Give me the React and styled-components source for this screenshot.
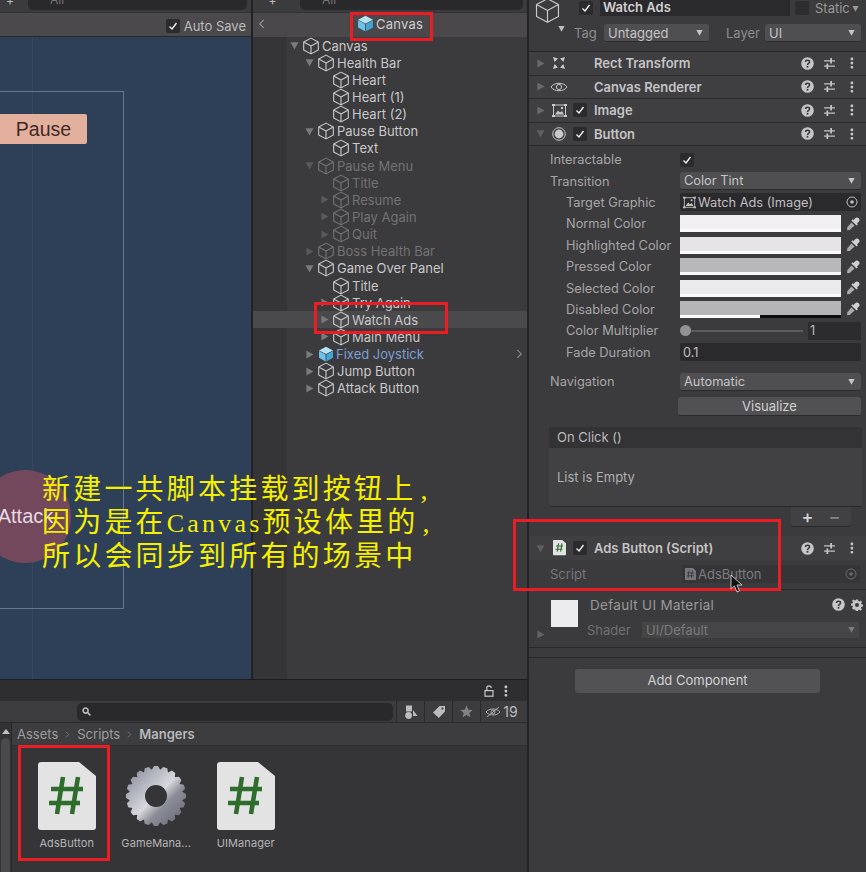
import React from "react";
import styled, { createGlobalStyle } from "styled-components";

const Global = createGlobalStyle`
  html, body { margin: 0; padding: 0; background: #3b3a3c; overflow: hidden; }
  * { box-sizing: border-box; }
`;

const Page = styled.div`
  position: relative; width: 866px; height: 872px; display: flex; overflow: hidden;
  font-family: Inter, "Noto Sans", "Liberation Sans", sans-serif; font-size: 13px; color: #c6c5c7; background: #3b3a3c;
`;
const LeftArea = styled.div`width: 529px; height: 872px; display: flex; flex-direction: column; flex: none;`;
const TopPanels = styled.div`height: 680px; display: flex; flex: none; border-bottom: 1px solid #1d1d1f;`;
const ScenePanel = styled.div`width: 253px; flex: none; display: flex; flex-direction: column; border-right: 2px solid #222124;`;
const HierarchyPanel = styled.div`flex: 1; display: flex; flex-direction: column; min-width: 0; border-right: 2px solid #232225;`;

const SearchStrip = styled.div`
  height: 12px; flex: none; display: flex; align-items: flex-end; gap: 8px; padding: 0 4px 2px 0; background: #3b3a3c; overflow: hidden;
`;
const PlusStub = styled.div`width: ${p => p.$w}px; height: 10px; display: flex; justify-content: center; color: #bbb; font-size: 12px; line-height: 2px;`;
const SearchStub = styled.div`
  flex: 1; height: 10px; background: #29282a; border-radius: 0 0 5px 5px; padding-left: 22px; font-size: 12px; line-height: 0; color: #77767a; overflow: hidden;
`;
const SceneBar = styled.div`
  height: 25px; flex: none; display: flex; align-items: center; justify-content: flex-end; gap: 4px; padding: 2px 5px 0 0;
  background: #4b494b; border-top: 1px solid #333234; border-bottom: 1px solid #2a292b; color: #bdbcbe; font-size: 13px;
`;
const SceneView = styled.div`position: relative; flex: 1; background: #2e3f58; overflow: hidden;`;
const CanvasFrame = styled.div`position: absolute; left: -10px; top: 54px; width: 134px; height: 518px; border: 1px solid #62768f;`;
const GridLine = styled.div`position: absolute; left: 32px; top: 0; bottom: 0; width: 1px; background: #36485f;`;
const PauseButton = styled.div`
  position: absolute; left: -3px; top: 77px; width: 90px; height: 30px; background: #e3b09e; border-radius: 2px;
  display: flex; align-items: center; justify-content: center; padding-left: 3px;
  font: 19.5px "Liberation Sans", sans-serif; color: #3f2a27;
`;
const AttackDisc = styled.div`
  position: absolute; left: -21px; top: 433px; width: 92px; height: 93px; border-radius: 50%; background: #74485c;
  display: flex; align-items: center; justify-content: center; font: 20px "Liberation Sans", sans-serif; color: #e7dbe2; padding-left: 1px;
`;

const CheckBox = styled.span`
  width: 14px; height: 14px; flex: none; display: inline-flex; align-items: center; justify-content: center;
  background: #2b2a2c; border-radius: 2px; color: #f0f0f0;
`;
const Tick = () => (
  <svg width="10" height="10" viewBox="0 0 10 10" fill="none" stroke="currentColor" strokeWidth="1.4"><path d="M1.5 5.5 L4 8 L8.5 2" /></svg>
);

const Breadcrumb = styled.div`
  height: 25px; flex: none; display: flex; align-items: center; background: #4a484a; border-top: 1px solid #333234;
  padding: 0 0 3px 5px; color: #9a999b;
`;
const CrumbTitle = styled.div`
  flex: 1; display: flex; align-items: center; justify-content: center; gap: 2px; padding-right: 12px; color: #d0cfd1; font-size: 13px; letter-spacing: .2px;
`;
const Tree = styled.div`
  flex: 1;
  background: linear-gradient(to right, #353436 34px, #3b3a3c 34px);
`;
const TreeRow = styled.div`
  height: 17.15px; display: flex; align-items: center; padding-left: ${p => 35 + p.$level * 15}px;
  color: ${p => (p.$prefab ? "#7d9fd2" : p.$dim ? "#737274" : "#c9c8ca")};
  background: ${p => (p.$selected ? "#4a494b" : "transparent")};
  font-size: 13px; white-space: nowrap;
`;
const Arrow = styled.span`width: 12px; flex: none; display: flex; justify-content: center; color: ${p => (p.$dim ? "#59585a" : "#7a797b")};`;
const RowName = styled.span`margin-left: 2px;`;
const RowChevron = styled.span`margin-left: auto; padding-right: 4px; display: flex; color: #8c8b8d;`;
const CubeSvg = styled.svg`flex: none; margin-left: ${p => p.$ml}px;`;
const IconSvg = styled.svg`flex: none;`;

const Tri = ({ open, size = 9 }) => (
  <svg width={size} height={size} viewBox="0 0 10 10" fill="currentColor">
    {open ? <path d="M0.5 1.5 H9.5 L5 9.5 Z" /> : <path d="M1.5 0.5 V9.5 L9.5 5 Z" />}
  </svg>
);
const Cube = ({ size = 18, ml = 2, color = "currentColor", sw = 1 }) => (
  <CubeSvg $ml={ml} width={size} height={size} viewBox="0 0 16 16" fill="none" stroke={color} strokeWidth={sw} strokeLinejoin="round">
    <path d="M8 1 L14.5 4.5 V11.5 L8 15 L1.5 11.5 V4.5 Z M1.5 4.5 L8 8 L14.5 4.5 M8 8 V15" />
  </CubeSvg>
);
const BlueCube = ({ size = 16, ml = 3 }) => (
  <CubeSvg $ml={ml} width={size} height={size} viewBox="0 0 16 16">
    <path d="M8 0.8 L15 4.4 L8 8 L1 4.4 Z" fill="#b6e4f7" />
    <path d="M1 4.9 L7.6 8.4 V15.4 L1 11.8 Z" fill="#6cc3ea" />
    <path d="M15 4.9 L8.4 8.4 V15.4 L15 11.8 Z" fill="#42a5d6" />
  </CubeSvg>
);

const treeData = [
  ["Canvas", 0, "open"], ["Health Bar", 1, "open"], ["Heart", 2], ["Heart (1)", 2], ["Heart (2)", 2],
  ["Pause Button", 1, "open"], ["Text", 2], ["Pause Menu", 1, "open", "dim"], ["Title", 2, null, "dim"],
  ["Resume", 2, "closed", "dim"], ["Play Again", 2, "closed", "dim"], ["Quit", 2, "closed", "dim"],
  ["Boss Health Bar", 1, "closed", "dim"], ["Game Over Panel", 1, "open"], ["Title", 2],
  ["Try Again", 2, "closed"], ["Watch Ads", 2, "closed", "sel"], ["Main Menu", 2, "closed"],
  ["Fixed Joystick", 1, "closed", "prefab"], ["Jump Button", 1, "closed"], ["Attack Button", 1, "closed"],
];

/* inspector */
const Inspector = styled.div`flex: 1; height: 872px; display: flex; flex-direction: column; background: #3b3a3c; min-width: 0;`;
const InspectorHead = styled.div`height: 52px; flex: none; display: flex; padding: 0 5px 0 3px; border-bottom: 1px solid #252426;`;
const HeadIcon = styled.div`width: 39px; flex: none; position: relative; color: #c9c8ca; margin-top: -3px;`;
const HeadDrop = styled.span`position: absolute; left: 26px; top: 22px; color: #bdbcbe;`;
const HeadBody = styled.div`flex: 1; min-width: 0; display: flex; flex-direction: column;`;
const HeadTop = styled.div`height: 16px; display: flex; align-items: center; gap: 7px; padding-left: 8px;`;
const NameField = styled.div`
  width: 190px; height: 16px; flex: none; background: #2a292b; font-weight: 600; color: #d0cfd1; padding-left: 3px; line-height: 15px; font-size: 13px;
`;
const EmptyCheck = styled.span`width: 14px; height: 14px; flex: none; background: #2d2c2e; margin-left: -2px;`;
const StaticLabel = styled.span`display: flex; align-items: center; gap: 2px; color: #99989a; margin-left: -1px;`;
const HeadBottom = styled.div`height: 22px; margin-top: 6px; display: flex; align-items: center; padding-left: 3px;`;
const HeadLabel = styled.span`color: #8e8d8f; width: ${p => p.$w}px; flex: none; text-align: ${p => (p.$right ? "right" : "left")};`;
const Dropdown = styled.div`
  height: 18px; display: flex; align-items: center; justify-content: space-between; padding: 0 6px 0 4px;
  background: #4f4e50; border-radius: 3px; color: #c5c4c6; border-bottom: 1px solid #2b2a2c;
  width: ${p => (p.$w ? `${p.$w}px` : "auto")}; flex: ${p => (p.$w ? "none" : 1)};
`;
const CompHeader = styled.div`
  height: 23.5px; flex: none; display: flex; align-items: center; background: #3f3e40;
  border-bottom: ${p => (p.$flat ? "0" : "1px solid #2a292b")}; padding-right: 12px; color: #c5c4c6;
  font-weight: 600; font-size: 13px;
`;
const CompArrow = styled.span`width: 20px; flex: none; padding-left: 7px; display: flex; color: ${p => (p.$open ? "#5e5d5f" : "#69686a")};`;
const CompIcon = styled.span`width: 20px; flex: none; display: flex; justify-content: center; color: #c8c7c9;`;
const CompCheck = styled.span`width: 22px; flex: none; display: flex; justify-content: center;`;
const CompTitle = styled.span`flex: 1; padding-left: 3px;`;
const CompTools = styled.span`display: flex; align-items: center; gap: 9px; color: #c5c4c6;`;
const ToolSliders = styled.span`display: flex; margin-right: 5px;`;
const PropList = styled.div`padding-top: 3px; display: flex; flex-direction: column;`;
const PropRow = styled.div`
  height: 21.4px; flex: none; display: flex; align-items: center; padding-left: ${p => (p.$indent ? 37 : 21)}px; padding-right: 5px;
  margin-top: ${p => p.$gap || 0}px; color: #a7a6a8; font-size: 12.8px;
`;
const PropLabel = styled.span`flex: none; width: ${p => (p.$indent ? 114 : 130)}px; white-space: nowrap;`;
const ValueField = styled.div`
  flex: 1; height: 18px; background: #2a292b; border-radius: 2px; display: flex; align-items: center; justify-content: space-between; padding: 0 3px; color: #c0bfc1;
`;
const ObjectName = styled.span`display: flex; align-items: center; gap: 2px;`;
const ColorField = styled.div`flex: 1; display: flex; align-items: center; gap: 4px;`;
const Swatch = styled.div`
  flex: 1; height: 17px; background: ${p => p.$c}; position: relative; overflow: hidden; border-bottom: ${p => (p.$half ? 0 : "3px solid #fbfafb")};
`;
const AlphaHalf = styled.div`position: absolute; left: 0; right: 0; bottom: 0; height: 3px; background: linear-gradient(to right, #fbfafb 50%, #0d0d0e 50%);`;
const DropperBox = styled.div`width: 16px; flex: none; color: #d0cfd1; display: flex; justify-content: center;`;
const SliderWrap = styled.div`flex: 1; display: flex; align-items: center; gap: 5px;`;
const Track = styled.div`flex: 1; height: 2px; background: #5b5a5c; position: relative;`;
const Thumb = styled.span`position: absolute; left: 0; top: -5px; width: 11px; height: 11px; border-radius: 50%; background: #929193;`;
const NumberField = styled.div`width: 53px; height: 18px; background: #2c2b2d; padding-left: 2px; color: #b9b8ba; line-height: 18px;`;
const VisualizeBtn = styled.div`
  height: 19px; margin: 5px 5px 0 149px; background: #515052; border-radius: 3px; text-align: center; line-height: 18px; color: #d2d1d3; border-bottom: 1px solid #2a292b; flex: none;
`;
const EventBox = styled.div`margin: 11px 4px 0 20px; flex: none;`;
const EventHead = styled.div`height: 21px; background: #333234; padding-left: 8px; line-height: 21px; color: #bcbbbd; border-radius: 3px 3px 0 0;`;
const EventBody = styled.div`height: 59px; background: #414042; padding-left: 8px; display: flex; align-items: center; color: #b0afb1; border-bottom: 1px solid #29282a; border-radius: 0 0 3px 3px;`;
const EventFoot = styled.div`
  width: 60px; height: 20px; margin-left: auto; margin-right: 11px; background: #414042; border-bottom: 1px solid #2a292b; border-radius: 0 0 3px 3px;
  display: flex; align-items: center; justify-content: center; gap: 15px; font-size: 18px; font-weight: 500; color: #d3d2d4; line-height: 18px;
`;
const MinusSign = styled.span`color: #858486;`;
const CompTopGap = styled.div`height: 9px; flex: none;`;
const ScriptBlock = styled.div`height: 30px; display: flex; align-items: flex-start; flex: none; padding: 5px 6px 0 21px; border-bottom: 1px solid #29282a; color: #78777a;`;
const ScriptLabel = styled.span`width: 132px; flex: none; padding-top: 1px;`;
const ScriptField = styled.div`flex: 1; height: 18px; background: #353436; display: flex; align-items: center; justify-content: space-between; padding: 0 3px; color: #7d7c7e;`;
const MaterialBlock = styled.div`height: 58px; position: relative; flex: none; padding: 7px 3px 0 22px; display: flex; gap: 12px; border-bottom: 1px solid #29282a;`;
const MatSwatch = styled.div`width: 27px; height: 27px; margin-top: 3px; background: #ecebed; flex: none;`;
const MatBody = styled.div`flex: 1; min-width: 0; display: flex; flex-direction: column; gap: 9px;`;
const MatTitleRow = styled.div`height: 16px; display: flex; justify-content: space-between; align-items: center; color: #99989a; letter-spacing: .3px; font-size: 13.5px;`;
const MatTools = styled.span`display: flex; gap: 6px; color: #c5c4c6; align-items: center;`;
const ShaderRow = styled.div`display: flex; align-items: center; color: #706f71; margin-left: -3px; padding-right: 4px;`;
const ShaderLabel = styled.span`width: 55px; flex: none;`;
const ShaderField = styled.div`flex: 1; height: 16px; background: #454446; padding: 0 4px; display: flex; justify-content: space-between; align-items: center; color: #7b7a7c;`;
const MatArrow = styled.span`position: absolute; left: 7px; bottom: 5px; color: #626163;`;
const Spacer = styled.div`height: 10px; flex: none; border-bottom: 1px solid #29282a;`;
const AddComponent = styled.div`
  width: 245px; height: 24px; margin: 11px auto 0; background: #525153; border-radius: 3px; text-align: center; line-height: 23px; color: #d2d1d3; flex: none;
`;
const CursorArrow = styled.span`position: absolute; left: 730px; top: 574px; display: flex;`;

/* project */
const ProjectPanel = styled.div`flex: 1; display: flex; flex-direction: column; min-height: 0; border-right: 2px solid #232225; background: #353436;`;
const ProjectTabs = styled.div`height: 21px; flex: none; background: #2e2d2f; display: flex; align-items: center; justify-content: flex-end; gap: 10px; padding: 0 19px 0 0; color: #c8c7c9;`;
const ProjectTools = styled.div`height: 22px; flex: none; background: #3c3b3d; display: flex; align-items: center; border-bottom: 1px solid #2a292b;`;
const AssetSearch = styled.div`width: 316px; height: 18px; margin-left: 77px; background: #29282a; border-radius: 5px; display: flex; align-items: center; padding-left: 5px; color: #bbb;`;
const ToolBtn = styled.div`
  width: ${p => p.$w || 28}px; height: 21px; flex: none; border-left: 1px solid #2a292b; display: flex; align-items: center; justify-content: center; gap: 2px; color: #bcbbbd; font-size: 14px;
`;
const ToolsGap = styled.div`width: 3px; flex: none;`;
const ProjectBody = styled.div`flex: 1; display: flex; min-height: 0;`;
const ScrollCol = styled.div`width: 12px; flex: none; background: #323133; display: flex; flex-direction: column; align-items: center; padding-top: 6px; gap: 4px; color: #c0bfc1; border-right: 1px solid #28272a;`;
const ScrollThumb = styled.div`width: 9px; flex: 1; background: #4a494b; border-radius: 5px 5px 0 0;`;
const AssetsCol = styled.div`flex: 1; display: flex; flex-direction: column; min-width: 0;`;
const CrumbBar = styled.div`height: 23px; flex: none; background: #3d3c3e; display: flex; align-items: center; gap: 7px; padding-left: 5px; color: #9d9c9e; border-bottom: 1px solid #2e2d2f;`;
const CrumbBold = styled.span`font-weight: 600; color: #b9b8ba;`;
const AssetGrid = styled.div`display: flex; padding: 16px 0 0 10px;`;
const AssetItem = styled.div`width: 89.5px; flex: none; display: flex; flex-direction: column; align-items: center; gap: 6px; font-size: 11px; color: #b5b4b6; letter-spacing: .1px;`;
const AssetIcon = styled.div`height: 68px; display: flex; align-items: center; justify-content: center;`;

/* overlays */
const Caption = styled.div`
  position: absolute; left: 42px; top: 472px; width: 420px; color: #f5f000; font-family: "Noto Sans CJK SC", serif;
  font-size: 28px; font-weight: 400; line-height: 30px; letter-spacing: 3.2px; white-space: nowrap;
`;
const CaptionLatin = styled.span`font-family: "Liberation Serif", serif; font-size: 26px; letter-spacing: 3.2px;`;
const CaptionPunct = styled.span`font-family: "Liberation Serif", serif; margin-left: 4px;`;
const RedBox = styled.div`
  position: absolute; left: ${p => p.$x}px; top: ${p => p.$y}px; width: ${p => p.$w}px; height: ${p => p.$h}px; border: 3px solid #ea1c24; pointer-events: none;
`;

/* icons */
const Help = () => (
  <svg width="13" height="13" viewBox="0 0 12 12"><circle cx="6" cy="6" r="5.8" fill="#c6c5c7" /><path d="M4.2 4.6 C4.2 2.6 7.9 2.6 7.9 4.6 C7.9 6 6 5.8 6 7.3" fill="none" stroke="#3b3a3c" strokeWidth="1.4" /><rect x="5.2" y="8.2" width="1.6" height="1.6" fill="#3b3a3c" /></svg>
);
const Sliders = () => (
  <svg width="13" height="13" viewBox="0 0 12 12" stroke="currentColor" strokeWidth="1.2"><path d="M1 3.5 H11 M1 8.5 H11" /><path d="M7.5 1 V6 M4 6 V11" strokeWidth="1.6" /></svg>
);
const Dots = () => (
  <svg width="4" height="12" viewBox="0 0 4 12" fill="currentColor"><rect x="0.6" y="0.6" width="2.6" height="2.6" rx=".8" /><rect x="0.6" y="4.8" width="2.6" height="2.6" rx=".8" /><rect x="0.6" y="9" width="2.6" height="2.6" rx=".8" /></svg>
);
const Tools = () => <CompTools><Help /><ToolSliders><Sliders /></ToolSliders><Dots /></CompTools>;
const RectIcon = () => (
  <svg width="14" height="14" viewBox="0 0 14 14" fill="currentColor"><path d="M1 1 L6 2.6 L2.6 6 Z M13 1 L8 2.6 L11.4 6 Z M1 13 L6 11.4 L2.6 8 Z M13 13 L8 11.4 L11.4 8 Z" /></svg>
);
const EyeIcon = () => (
  <svg width="18" height="12" viewBox="0 0 18 12" fill="none" stroke="currentColor" strokeWidth="1"><path d="M1 6 C4 1 14 1 17 6 C14 11 4 11 1 6 Z" /><circle cx="9" cy="6" r="2.6" /></svg>
);
const ImageIcon = ({ size = 15 }) => (
  <IconSvg width={size} height={size} viewBox="0 0 15 15"><rect x="1.5" y="2" width="12" height="11" fill="none" stroke="currentColor" /><path d="M3 11.5 L6 7.5 L8 9.5 L10 8 L12 11.5 Z" fill="currentColor" /><circle cx="10" cy="5" r="1.2" fill="currentColor" /><path d="M0 1h3v2h-3zM12 1h3v2h-3zM0 12h3v2h-3zM12 12h3v2h-3z" fill="currentColor" /></IconSvg>
);
const RadioIcon = () => (
  <svg width="14" height="14" viewBox="0 0 14 14"><circle cx="7" cy="7" r="6.3" fill="none" stroke="currentColor" /><circle cx="7" cy="7" r="4.4" fill="currentColor" /></svg>
);
const Target = ({ c = "currentColor" }) => (
  <svg width="12" height="12" viewBox="0 0 12 12"><circle cx="6" cy="6" r="5" fill="none" stroke={c} /><circle cx="6" cy="6" r="1.8" fill={c} /></svg>
);
const Dropper = () => (
  <svg width="14" height="14" viewBox="0 0 13 13" fill="currentColor"><path d="M8.5 1.2 a1.8 1.8 0 0 1 3.3 3.3 L10.3 6 L11 6.8 L9.8 8 L5 3.2 L6.2 2 L7 2.7 Z" /><path d="M5 5 L8 8 L3.4 12 L1 12.2 L1.2 9.6 Z" opacity=".75" /></svg>
);
const ScriptGlyph = ({ size = 58, hash = "#2e6d2b", body = "#e3e3e4", sw = 4.6 }) => (
  <svg width={size} height={size * 68 / 58} viewBox="0 0 58 68">
    <path d="M3 0 H41 L58 14 V65 a3 3 0 0 1 -3 3 H3 a3 3 0 0 1 -3 -3 V3 a3 3 0 0 1 3 -3 Z" fill={body} />
    <path d="M25 15 L19 52 M40 15 L34 52" stroke={hash} strokeWidth={sw} fill="none" />
    <path d="M13 27 H45 M11 41 H42" stroke={hash} strokeWidth={sw} fill="none" />
  </svg>
);
const gearPath = (() => {
  const n = 20, R = 30, r = 26.5;
  let d = "";
  for (let i = 0; i < n; i++) {
    const a = (i / n) * Math.PI * 2, s = (Math.PI * 2) / n;
    const pts = [[r, a - s * 0.5], [R, a - s * 0.22], [R, a + s * 0.22], [r, a + s * 0.5]];
    pts.forEach(([q, t], j) => {
      d += `${i === 0 && j === 0 ? "M" : "L"}${(30 + q * Math.cos(t)).toFixed(2)} ${(30 + q * Math.sin(t)).toFixed(2)} `;
    });
  }
  return d + "Z";
})();
const Gear = () => (
  <svg width="60" height="60" viewBox="0 0 60 60">
    <defs>
      <linearGradient id="gearFill" x1="0" y1="0" x2="1" y2="1">
        <stop offset="0" stopColor="#7f8290" /><stop offset=".3" stopColor="#b4b6c0" /><stop offset=".5" stopColor="#d8d9de" />
        <stop offset=".65" stopColor="#8b8d98" /><stop offset="1" stopColor="#62646f" />
      </linearGradient>
    </defs>
    <path d={gearPath} fill="url(#gearFill)" />
    <circle cx="30" cy="30" r="11" fill="#353436" />
  </svg>
);
const SmallGear = () => (
  <svg width="12" height="12" viewBox="0 0 24 24" fill="currentColor"><path d="M10 1h4l.6 3.2 2 .9L19.4 3l2.8 2.8-2.1 2.8.9 2 3 .6v4l-3.2.6-.9 2 2.1 2.8-2.8 2.8-2.8-2.1-2 .9-.6 3h-4l-.6-3.2-2-.9L4.6 21l-2.8-2.8 2.1-2.8-.9-2-3-.6V9l3.2-.6.9-2L2 3.6 4.8.8l2.8 2.1 2-.9Z" /><circle cx="12" cy="12" r="4" fill="#3b3a3c" /></svg>
);
const Mag = () => (
  <svg width="9" height="9" viewBox="0 0 10 10" fill="none" stroke="currentColor" strokeWidth="1.7"><circle cx="4" cy="4" r="2.8" /><path d="M6 6 L9.3 9.3" /></svg>
);
const Lock = () => (
  <svg width="10" height="12" viewBox="0 0 10 12" fill="none" stroke="currentColor" strokeWidth="1.2"><rect x="1" y="5.6" width="8" height="5.6" /><path d="M2.8 5.6 V3 a2.2 2.2 0 0 1 4.4 0" /></svg>
);
const Shapes = () => (
  <svg width="14" height="14" viewBox="0 0 14 14" fill="currentColor"><rect x="2" y="0.5" width="6" height="6" /><circle cx="4.6" cy="10.5" r="3.4" /><path d="M9 5 L13.5 11 H9 Z" /></svg>
);
const TagIcon = () => (
  <svg width="14" height="14" viewBox="0 0 14 14" fill="currentColor"><path d="M7.5 1 H13 V6.5 L6.8 13 L1 7.5 Z" /><circle cx="10.4" cy="3.6" r="1.1" fill="#3c3b3d" /></svg>
);
const Star = () => (
  <svg width="13" height="13" viewBox="0 0 14 14" fill="#818082"><path d="M7 .6 L9 5 L13.6 5.4 L10.1 8.5 L11.1 13.2 L7 10.7 L2.9 13.2 L3.9 8.5 L.4 5.4 L5 5 Z" /></svg>
);
const HiddenEye = () => (
  <svg width="16" height="12" viewBox="0 0 16 12" fill="none" stroke="#a9a8aa" strokeWidth="1"><path d="M1 6 C4 2 12 2 15 6 C12 10 4 10 1 6 Z" /><circle cx="8" cy="6" r="2" /><path d="M2 11 L14 1" /></svg>
);
const Chev = ({ left, size = 8, c = "currentColor" }) => (
  <svg width={size} height={size * 1.4} viewBox="0 0 8 11" fill="none" stroke={c} strokeWidth="1.2">
    <path d={left ? "M6.5 1 L2 5.5 L6.5 10" : "M1.5 1 L6 5.5 L1.5 10"} />
  </svg>
);
const Cursor = () => (
  <svg width="14" height="20" viewBox="0 0 14 20"><path d="M1 1 V15 L4.4 12 L7 18 L9.5 17 L7 11 L12 11 Z" fill="#111" stroke="#e8e8e8" strokeWidth=".8" /></svg>
);
const SmallScript = ({ c = "#9a999b" }) => (
  <svg width="11" height="12" viewBox="0 0 11 12"><path d="M0 0 H8 L11 3 V12 H0 Z" fill={c} /><path d="M4 2.5 L3 10 M7.4 2.5 L6.4 10 M2 5 H9 M2 7.8 H9" stroke="#3a393b" strokeWidth=".9" /></svg>
);

const colors = [
  ["Normal Color", "#f1eff2"], ["Highlighted Color", "#e6e4e7"], ["Pressed Color", "#b8b7b9"],
  ["Selected Color", "#ebeaec"], ["Disabled Color", "#b5b4b6", true],
];

const Comp = ({ icon, title, open, check, flat }) => (
  <CompHeader $flat={flat}>
    <CompArrow $open={open}><Tri open={open} size={9} /></CompArrow>
    <CompIcon>{icon}</CompIcon>
    <CompCheck>{check && <CheckBox><Tick /></CheckBox>}</CompCheck>
    <CompTitle>{title}</CompTitle>
    <Tools />
  </CompHeader>
);

export default function App() {
  return (
    <Page>
      <Global />
      <LeftArea>
        <TopPanels>
          <ScenePanel>
            <SearchStrip><PlusStub $w={20}>+</PlusStub><SearchStub>All</SearchStub></SearchStrip>
            <SceneBar><CheckBox><Tick /></CheckBox>Auto Save</SceneBar>
            <SceneView>
              <GridLine />
              <CanvasFrame />
              <PauseButton>Pause</PauseButton>
              <AttackDisc>Attack</AttackDisc>
            </SceneView>
          </ScenePanel>
          <HierarchyPanel>
            <SearchStrip><PlusStub $w={39}>+</PlusStub><SearchStub>All</SearchStub></SearchStrip>
            <Breadcrumb>
              <Chev left size={7} />
              <CrumbTitle><BlueCube size={17} ml={0} />Canvas</CrumbTitle>
            </Breadcrumb>
            <Tree>
              {treeData.map(([name, level, state, flag], i) => (
                <TreeRow key={i} $level={level} $dim={flag === "dim"} $prefab={flag === "prefab"} $selected={flag === "sel"}>
                  <Arrow $dim={flag === "dim"}>{state && <Tri open={state === "open"} />}</Arrow>
                  {flag === "prefab" ? <BlueCube /> : <Cube />}
                  <RowName>{name}</RowName>
                  {flag === "prefab" && <RowChevron><Chev size={7} /></RowChevron>}
                </TreeRow>
              ))}
            </Tree>
          </HierarchyPanel>
        </TopPanels>
        <ProjectPanel>
          <ProjectTabs><Lock /><Dots /></ProjectTabs>
          <ProjectTools>
            <AssetSearch><Mag /></AssetSearch>
            <ToolsGap />
            <ToolBtn><Shapes /></ToolBtn>
            <ToolBtn><TagIcon /></ToolBtn>
            <ToolBtn><Star /></ToolBtn>
            <ToolBtn $w={42}><HiddenEye />19</ToolBtn>
          </ProjectTools>
          <ProjectBody>
            <ScrollCol>
              <svg width="8" height="5" viewBox="0 0 8 5" fill="currentColor"><path d="M4 0 L8 5 H0 Z" /></svg>
              <ScrollThumb />
            </ScrollCol>
            <AssetsCol>
              <CrumbBar>Assets <Chev size={5} c="#8a898b" /> Scripts <Chev size={5} c="#8a898b" /> <CrumbBold>Mangers</CrumbBold></CrumbBar>
              <AssetGrid>
                <AssetItem><AssetIcon><ScriptGlyph /></AssetIcon>AdsButton</AssetItem>
                <AssetItem><AssetIcon><Gear /></AssetIcon>GameMana...</AssetItem>
                <AssetItem><AssetIcon><ScriptGlyph /></AssetIcon>UIManager</AssetItem>
              </AssetGrid>
            </AssetsCol>
          </ProjectBody>
        </ProjectPanel>
      </LeftArea>
      <Inspector>
        <InspectorHead>
          <HeadIcon>
            <Cube size={27} ml={2} sw={.7} />
            <HeadDrop><Tri open size={7} /></HeadDrop>
          </HeadIcon>
          <HeadBody>
            <HeadTop>
              <CheckBox><Tick /></CheckBox>
              <NameField>Watch Ads</NameField>
              <EmptyCheck />
              <StaticLabel>Static <Tri open size={7} /></StaticLabel>
            </HeadTop>
            <HeadBottom>
              <HeadLabel $w={30}>Tag</HeadLabel>
              <Dropdown $w={105}>Untagged <Tri open size={7} /></Dropdown>
              <HeadLabel $w={51} $right>Layer</HeadLabel>
              <HeadLabel $w={5} />
              <Dropdown>UI <Tri open size={7} /></Dropdown>
            </HeadBottom>
          </HeadBody>
        </InspectorHead>
        <Comp icon={<RectIcon />} title="Rect Transform" />
        <Comp icon={<EyeIcon />} title="Canvas Renderer" />
        <Comp icon={<ImageIcon />} title="Image" check />
        <Comp icon={<RadioIcon />} title="Button" check open />
        <PropList>
          <PropRow><PropLabel>Interactable</PropLabel><CheckBox><Tick /></CheckBox></PropRow>
          <PropRow><PropLabel>Transition</PropLabel><Dropdown>Color Tint <Tri open size={7} /></Dropdown></PropRow>
          <PropRow $indent>
            <PropLabel $indent>Target Graphic</PropLabel>
            <ValueField><ObjectName><ImageIcon size={13} />Watch Ads (Image)</ObjectName><Target /></ValueField>
          </PropRow>
          {colors.map(([name, c, half]) => (
            <PropRow $indent key={name}>
              <PropLabel $indent>{name}</PropLabel>
              <ColorField>
                <Swatch $c={c} $half={half}>{half && <AlphaHalf />}</Swatch>
                <DropperBox><Dropper /></DropperBox>
              </ColorField>
            </PropRow>
          ))}
          <PropRow $indent>
            <PropLabel $indent>Color Multiplier</PropLabel>
            <SliderWrap><Track><Thumb /></Track><NumberField>1</NumberField></SliderWrap>
          </PropRow>
          <PropRow $indent><PropLabel $indent>Fade Duration</PropLabel><ValueField>0.1</ValueField></PropRow>
          <PropRow $gap={8}><PropLabel>Navigation</PropLabel><Dropdown>Automatic <Tri open size={7} /></Dropdown></PropRow>
          <VisualizeBtn>Visualize</VisualizeBtn>
        </PropList>
        <EventBox>
          <EventHead>On Click ()</EventHead>
          <EventBody>List is Empty</EventBody>
          <EventFoot>+<MinusSign>−</MinusSign></EventFoot>
        </EventBox>
        <CompTopGap />
        <Comp icon={<ScriptGlyph size={13} sw={5} />} title="Ads Button (Script)" check open flat />
        <ScriptBlock>
          <ScriptLabel>Script</ScriptLabel>
          <ScriptField><ObjectName><SmallScript c="#777678" />AdsButton</ObjectName><Target c="#6d6c6e" /></ScriptField>
        </ScriptBlock>
        <MaterialBlock>
          <MatSwatch />
          <MatBody>
            <MatTitleRow>Default UI Material<MatTools><Help /><SmallGear /></MatTools></MatTitleRow>
            <ShaderRow><ShaderLabel>Shader</ShaderLabel><ShaderField>UI/Default <Tri open size={7} /></ShaderField></ShaderRow>
          </MatBody>
          <MatArrow><Tri size={9} /></MatArrow>
        </MaterialBlock>
        <Spacer />
        <AddComponent>Add Component</AddComponent>
      </Inspector>
      <Caption>
        新建一共脚本挂载到按钮上<CaptionPunct>,</CaptionPunct><br />
        因为是在<CaptionLatin>Canvas</CaptionLatin>预设体里的<CaptionPunct>,</CaptionPunct><br />
        所以会同步到所有的场景中
      </Caption>
      <RedBox $x={350} $y={12} $w={83} $h={29} />
      <RedBox $x={314} $y={302} $w={134} $h={32} />
      <RedBox $x={513} $y={519} $w={268} $h={72} />
      <RedBox $x={18} $y={745} $w={92} $h={116} />
      <CursorArrow><Cursor /></CursorArrow>
    </Page>
  );
}
